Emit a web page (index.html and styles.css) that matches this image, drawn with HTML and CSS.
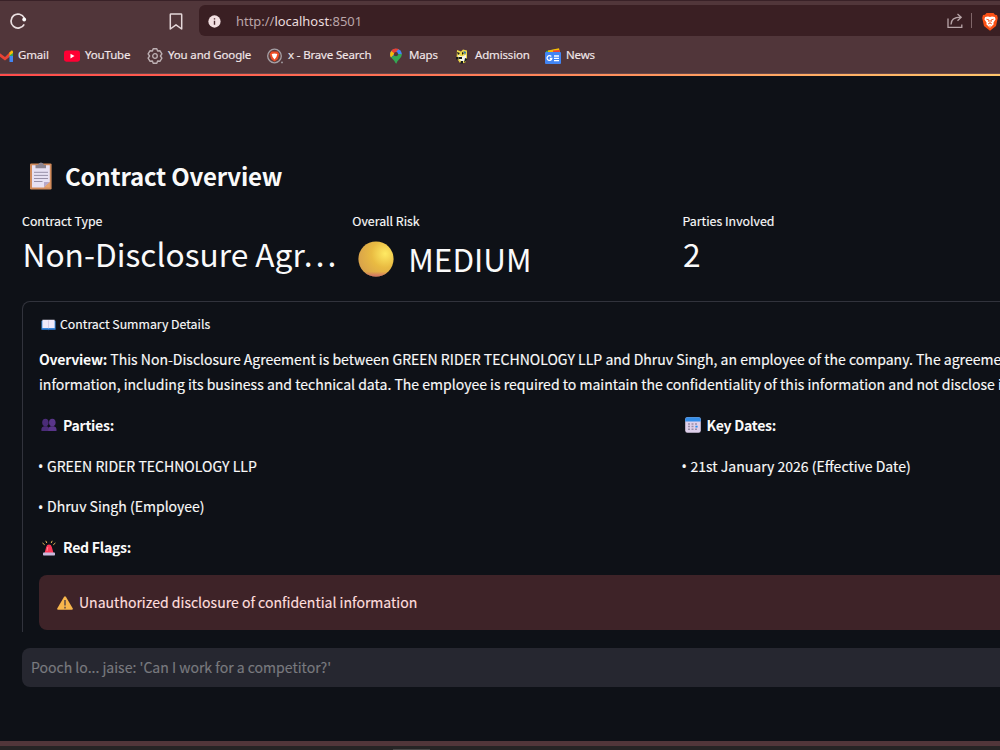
FILE: index.html
```html
<!DOCTYPE html>
<html lang="en">
<head>
<meta charset="utf-8">
<title>Contract Overview</title>
<link rel="stylesheet" href="styles.css">
</head>
<body>
<div class="window">
  <header class="chrome">
    <div class="toolbar">
      <svg class="reload" viewBox="0 0 18 18"><path d="M15.2 12.3A7 7 0 1 1 15.3 6" fill="none" stroke="#eadfe0" stroke-width="1.7"/><circle cx="15.2" cy="7.5" r="1.9" fill="#fff"/></svg>
      <svg class="mark" viewBox="0 0 14 18"><path d="M1.3 1.5Q1.3 1 2 1H12Q12.7 1 12.7 1.7V16L7 11.8L1.3 16Z" fill="none" stroke="#e4d7d9" stroke-width="1.5" stroke-linejoin="round"/></svg>
      <div class="address">
        <svg class="info" viewBox="0 0 14 14"><circle cx="7" cy="7" r="6.6" fill="#f2dfe1"/><path d="M7 6.2V10.4M7 3.4V4.8" stroke="#49292e" stroke-width="1.5"/></svg>
        <span class="url">http://<b>localhost</b>:8501</span>
        <svg class="share" viewBox="0 0 16 16"><path d="M1 5.5V14.3H14.8V11.5M4 11.5C4 6.8 7 4.2 13.5 4.2M10.5 1L14.2 4.2L10.5 7.8" fill="none" stroke="#b8a5a8" stroke-width="1.3"/></svg>
        <span class="divider"></span>
        <svg class="lion" viewBox="0 0 16 18"><path d="M4.5 0H11.5L13 1.8L15 2L15.8 5L14 13L8 17.8L2 13L.2 5L1 2L3 1.8Z" fill="#fb5116"/><path d="M3.2 4L6 3.4L8 4L10 3.4L12.8 4L13.6 6.2L11.5 9.5V11.5L8 14.8L4.5 11.5V9.5L2.4 6.2Z" fill="#fff"/><path d="M4.4 6.2L7 7L6.4 8.7M11.6 6.2L9 7L9.6 8.7M8 7V10M6 11L8 10.1L10 11M8 12.5V14" stroke="#fb5116" fill="none" stroke-width=".9"/></svg>
      </div>
    </div>
    <nav class="bookmarks">
      <a class="bm gmail"><svg viewBox="0 0 16 16"><path d="M0 3L8 9L13 4V8.5L8 12.6L0 6.5Z" fill="#ea4335"/><path d="M12.5 4.5L14.5 2.6Q16 2 16 4V6.2L12.5 8.5Z" fill="#fbbc04"/><path d="M12.5 7.5L16 5V9H12.5Z" fill="#34a853"/><path d="M12.5 8H16V13.4Q16 14 15.4 14H12.5Z" fill="#4285f4"/></svg><span>Gmail</span></a>
      <a class="bm youtube"><svg viewBox="0 0 16 16"><rect y="2.5" width="16" height="11.2" rx="2.4" fill="#ff0033"/><path d="M6.5 5.8L10.5 8.1L6.5 10.4Z" fill="#fff"/></svg><span>YouTube</span></a>
      <a class="bm account"><svg viewBox="0 0 16 16"><path d="M6.2 .8H9.8L10.6 3L12.9 2.7L14.9 5.8L13.4 8L14.9 10.2L12.9 13.3L10.6 13L9.8 15.2H6.2L5.4 13L3.1 13.3L1.1 10.2L2.6 8L1.1 5.8L3.1 2.7L5.4 3Z" fill="none" stroke="#bdb0b3" stroke-width="1.4" stroke-linejoin="round"/><circle cx="8" cy="8" r="2.3" fill="none" stroke="#bdb0b3" stroke-width="1.3"/></svg><span>You and Google</span></a>
      <a class="bm brave"><svg viewBox="0 0 16 16"><circle cx="7.5" cy="8" r="6.8" fill="#623c3b" stroke="#a5a0a6" stroke-width="1.3"/><path d="M4.5 3.6H10.5L12.4 6L10.8 11L7.5 13.4L4.2 11L2.6 6Z" fill="#ee4c25"/><path d="M4.7 6L7.5 5.4L10.3 6L9.4 9L7.5 11.5L5.6 9Z" fill="#fff"/><circle cx="15" cy="14.4" r=".9" fill="#a5a0a6"/></svg><span>x - Brave Search</span></a>
      <a class="bm maps"><svg viewBox="0 0 16 16"><path d="M3 9.6C1 5.8 2.5 1 8 .7L8 6Z" fill="#4285f4"/><path d="M3.3 2.9C5 .5 8.8-.1 11.2 1.5L6.5 6.5Z" fill="#ea4335"/><path d="M3.3 2.9L6.5 5.8L3 9.6Q1 6 3.3 2.9Z" fill="#fbbc04"/><path d="M10.5 1.2Q14 3 13.8 6.5L9 7L8.5 3.5Z" fill="#4285f4"/><path d="M13.8 6C13.9 10.2 9.8 11.2 8.6 15.2Q8 15.9 7.5 15.1C6.8 12.6 4.5 11.5 3 9.3L9.6 6Z" fill="#34a853"/><circle cx="8" cy="6.2" r="2.1" fill="#51363a"/></svg><span>Maps</span></a>
      <a class="bm admission"><svg viewBox="0 0 16 16"><path d="M3 2L7 3.4L9 1.4L13 2.6V10L11 15H6L2.6 10Z" fill="#efd84a"/><path d="M4 7L8 8.4L12 6.6V12L8 14L5 11Z" fill="#f5f5ec"/><path d="M3 4L6 5L4 7ZM8 4L10 5L8 7ZM5 9H8V11H5ZM11 10L13.5 11L10 15ZM2 9H4.6V11.6H2ZM7 13H9V15.4H6Z" fill="#171b1d"/><path d="M9.4 3L12 4L11 7Z" fill="#2779b8"/></svg><span>Admission</span></a>
      <a class="bm news"><svg viewBox="0 0 16 16"><path d="M1 3L12 1V6H1Z" fill="#34a853"/><path d="M3 2.4L14 .2L15 5H3Z" fill="#fbbc04"/><path d="M8 2.6L14.6 2V6H8Z" fill="#ea4335"/><rect y="4" width="16" height="12" rx="1" fill="#4285f4"/><path d="M6.3 8.5A2.4 2.4 0 1 0 6.8 10.5H4.8M9 8H14M9 10.3H14M9 12.6H14" fill="none" stroke="#fff" stroke-width="1.3"/></svg><span>News</span></a>
    </nav>
  </header>
  <div class="rainbow"></div>

  <main class="page">
    <h3 class="heading">
      <svg viewBox="0 0 24 28"><rect x="1" y="1.4" width="21.6" height="26" rx="1.2" fill="#d18b5b"/><path d="M3 3.2H20.8V20L15 25.5H3Z" fill="#e7e1f3"/><path d="M20.8 20H15V25.5Z" fill="#b8a8c8"/><path d="M20.8 20V25.5H15Z" fill="#e6a36f"/><path d="M6.5 3H9Q9.5.5 12 .5T15 3H17V6.3H6.5Z" fill="#8b8491"/><path d="M5 10.3H19M5 13.4H19M5 16.5H19M5 19.5H13.5" stroke="#8f879f" stroke-width=".9"/></svg>
      <span>Contract Overview</span>
    </h3>
    <section class="metrics">
      <div class="metric"><div class="label">Contract Type</div><div class="value">Non-Disclosure Agr…</div></div>
      <div class="metric"><div class="label">Overall Risk</div><div class="value risk">
        <svg viewBox="0 0 36 36"><defs><radialGradient id="ball" cx=".76" cy=".35" r=".78"><stop offset="0" stop-color="#ffea63"/><stop offset=".5" stop-color="#e9bb42"/><stop offset="1" stop-color="#d9a34a"/></radialGradient><linearGradient id="rim" x1="0" y1="0" x2="0" y2="1"><stop offset=".86" stop-color="#d26e68" stop-opacity="0"/><stop offset="1" stop-color="#d26e68"/></linearGradient></defs><circle cx="18" cy="18" r="17.6" fill="url(#ball)"/><circle cx="18" cy="18" r="17.6" fill="url(#rim)"/></svg><span>MEDIUM</span></div></div>
      <div class="metric"><div class="label">Parties Involved</div><div class="value">2</div></div>
    </section>

    <section class="details">
      <div class="summary">
        <svg viewBox="0 0 16 12"><path d="M.5 1.5H15.5V11H.5Z" fill="#3d8ee5"/><path d="M1.5.5H14.5V9.3H1.5Z" fill="#eee9fa"/><path d="M8 1V9.5" stroke="#cfc4e2" stroke-width=".8"/><path d="M1 10.6H7L8 11L9 10.6H15" stroke="#2464b5" fill="none"/></svg>
        <span>Contract Summary Details</span>
      </div>
      <p class="overview"><b>Overview:</b> This Non-Disclosure Agreement is between GREEN RIDER TECHNOLOGY LLP and Dhruv Singh, an employee of the company. The agreement<br>information, including its business and technical data. The employee is required to maintain the confidentiality of this information and not disclose it</p>
      <div class="columns">
        <div class="col">
          <p class="line title"><svg viewBox="0 0 16 16"><g fill="#4b2c78"><ellipse cx="4.4" cy="5.5" rx="3.2" ry="3.8"/><path d="M.4 14V11.8Q.4 10 3 9.2H6Q8 10 8 12V14Z"/></g><g fill="#59358a"><ellipse cx="11.3" cy="5.5" rx="3.3" ry="3.8"/><path d="M7.3 14V11.8Q7.3 10 10 9.2H12.8Q15.5 10 15.5 12V14Z"/></g></svg><b>Parties:</b></p>
          <p class="line"><span class="dot">•</span>GREEN RIDER TECHNOLOGY LLP</p>
          <p class="line"><span class="dot">•</span>Dhruv Singh (Employee)</p>
          <p class="line title"><svg viewBox="0 0 16 16"><path d="M3.6 13L5.2 7Q5.8 4.6 8 4.6T10.8 7L12.5 13Z" fill="#ff3858"/><path d="M6 11L6.8 7" stroke="#ff8291"/><rect x="2" y="12.6" width="12" height="2.9" rx=".7" fill="#c8b9dd"/><path d="M1.5 3L3.7 4.8M4.8.8L5.8 3M11.2.8L10.2 3M14.4 3L12.3 4.8" stroke="#e6b95a"/></svg><b>Red Flags:</b></p>
        </div>
        <div class="col">
          <p class="line title"><svg viewBox="0 0 16 16"><rect x=".2" y=".2" width="15.6" height="15.6" rx="2.2" fill="#ded0ea"/><path d="M.2 4.4V2.4Q.2.2 2.4.2H13.6Q15.8.2 15.8 2.4V4.4Z" fill="#348ee9"/><path d="M3 7H5M6.5 7H8.5M10 7H12M3 9.6H5M6.5 9.6H8.5M3 12.2H5M6.5 12.2H8.5M10 12.2H12" stroke="#998da9" stroke-width="1.5"/><path d="M10.4 9.6H12.6" stroke="#268bef" stroke-width="1.6"/></svg><b>Key Dates:</b></p>
          <p class="line"><span class="dot">•</span>21st January 2026 (Effective Date)</p>
        </div>
      </div>
      <div class="alert">
        <svg viewBox="0 0 16 14"><path d="M7.1.7Q8 0 8.9.7L15.8 12.4Q15.8 13.7 15 13.8H1Q.1 13.6.2 12.4Z" fill="#f8b64c"/><path d="M8 4V9.4M8 10.7V12.4" stroke="#675247" stroke-width="1.6"/></svg>
        <span>Unauthorized disclosure of confidential information</span>
      </div>
    </section>
    <div class="chat"><span>Pooch lo... jaise: 'Can I work for a competitor?'</span></div>
  </main>
  <footer class="frame"><div class="taskbar"></div></footer>
</div>
</body>
</html>
```
FILE: styles.css
```css
* { box-sizing: border-box; }
body { margin: 0; background: #0e1117; color: #fafafa; font-family: "Noto Sans CJK SC", "Noto Sans", sans-serif; }
svg { display: block; flex: none; }
p, h3 { margin: 0; }
.window { width: 1000px; height: 750px; overflow: hidden; display: flex; flex-direction: column; white-space: nowrap; }

.chrome { height: 74px; flex: none; background: #51363a; border-top: 1px solid #392127; border-bottom: 1px solid #65494c; font-family: "Noto Sans", sans-serif; }
.toolbar { display: flex; height: 36px; padding: 4px 0 0 9px; }
.reload { width: 18px; height: 18px; margin-top: 7px; }
.mark { width: 14px; height: 18px; margin: 8px 0 0 142px; }
.address { margin-left: 16px; flex: 1; height: 31px; display: flex; align-items: center; background: #3a1f23; border-radius: 6px 0 0 6px; padding-left: 9px; }
.info { width: 13px; height: 13px; margin-top: 1px; }
.url { margin-left: 15px; font-size: 12.95px; width: 711px; color: #baa5a8; }
.url b { font-weight: 400; color: #eadcde; }
.share { width: 16px; height: 16px; margin-top: 1px; }
.divider { width: 1px; height: 15px; background: #806669; margin-left: 8px; }
.lion { width: 16px; height: 18px; margin-left: 10px; margin-top: 2px; }

.bookmarks { display: flex; height: 36px; margin-left: -3px; }
.bm { display: flex; align-items: center; gap: 5px; flex: none; font-size: 11.5px; letter-spacing: -0.16px; color: #f1e7e9; -webkit-text-stroke: 0.15px #f1e7e9; }
.bm svg { width: 16px; height: 16px; margin-top: 1px; }
.bm span { padding-bottom: 1px; }
.gmail { width: 67px; }
.youtube { width: 83px; }
.account { width: 120px; }
.brave { width: 121px; }
.maps { width: 66px; }
.admission { width: 91px; }
.rainbow { height: 2px; flex: none; background: linear-gradient(90deg, #ff4b4b, #ff7355 40%, #ffc66b); }

.page { flex: 1; padding: 81px 0 0 22px; min-height: 0; }
.heading { display: flex; align-items: center; height: 38px; font-size: 24px; font-weight: 700; letter-spacing: -0.2px; }
.heading svg { width: 24px; height: 28px; margin: 0 12px 0 7px; }
.heading span { padding-bottom: 2px; }
.metrics { display: flex; padding-top: 15px; height: 106px; }
.metric { width: 330.3px; flex: none; }
.label { font-size: 12.35px; line-height: 22px; -webkit-text-stroke: 0.15px #fafafa; }
.value { font-size: 31.7px; line-height: 42px; padding-left: .5px; }
.risk { display: flex; align-items: center; padding: 5px 0 0 6px; }
.risk svg { width: 36px; height: 36px; margin: 0 14px 0 0; }
.risk span { font-size: 31.5px; line-height: 42px; padding-bottom: 2px; }

.details { width: 1300px; height: 331px; overflow: hidden; border: 1px solid #31333c; border-bottom: 0; border-radius: 8px 8px 0 0; padding-left: 16px; -webkit-text-stroke: 0.15px #fafafa; }
.summary { display: flex; align-items: center; height: 43px; font-size: 12.3px; }
.summary svg { width: 15px; height: 12px; margin: 2px 4px 0 2px; }
.overview { font-size: 14.04px; line-height: 25.3px; padding-top: 2px; }
.overview b, .title b { letter-spacing: -0.25px; -webkit-text-stroke: 0; }
.columns { display: flex; padding-top: 7px; height: 177.8px; }
.col { width: 643.5px; flex: none; }
.line { display: flex; align-items: center; height: 40.7px; font-size: 14.04px; }
.dot { width: 8px; font-family: "Noto Sans", sans-serif; font-size: 14px; text-indent: -1px; padding-top: 2px; }
.title svg { width: 16px; height: 16px; margin: 1px 6px 0 2px; }
.alert { display: flex; align-items: center; height: 55px; border-radius: 8px; background: #3e2328; color: #ffdede; font-size: 14.04px; padding: 0 0 1px 18px; -webkit-text-stroke: 0.15px #ffdede; }
.alert svg { width: 16px; height: 14px; margin: 1px 6px 0 0; }
.chat { display: flex; align-items: center; margin-top: 16px; height: 39px; padding: 0 0 2px 9px; background: #262730; color: #797a7f; border-radius: 8px 0 0 8px; font-size: 14.04px; -webkit-text-stroke: 0.15px #797a7f; }

.frame { flex: none; height: 9px; background: #262425; border-top: 5px solid #51363a; display: flex; align-items: flex-end; }
.taskbar { width: 37px; height: 1px; margin-left: 393px; background: #4a4848; }
```
